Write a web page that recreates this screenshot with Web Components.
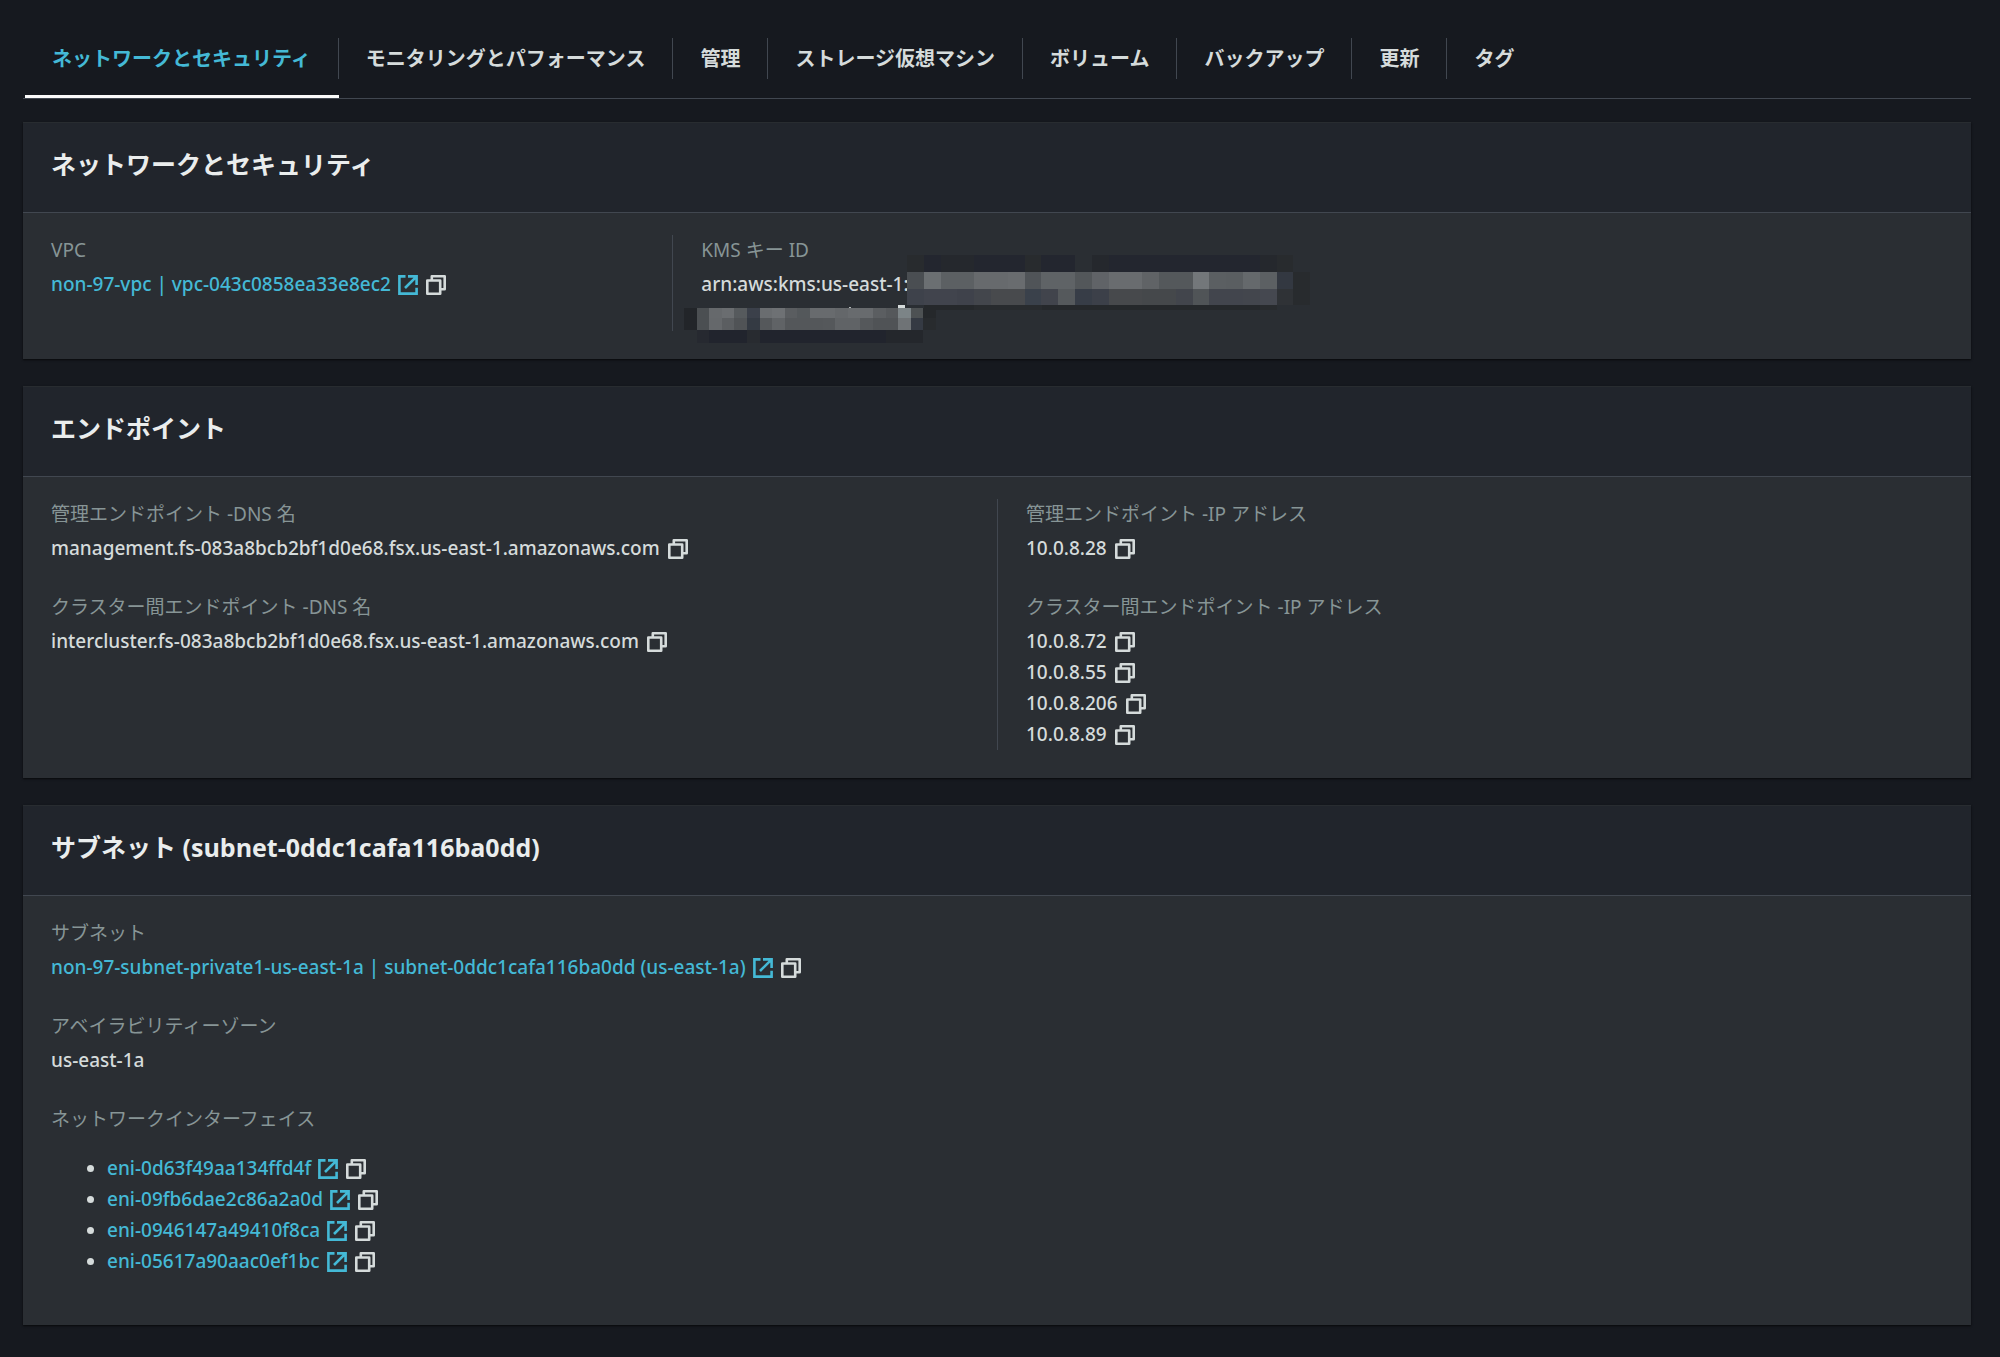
<!DOCTYPE html>
<html lang="ja">
<head>
<meta charset="utf-8">
<title>ネットワークとセキュリティ</title>
<style>
  body {
    margin: 0;
    background: #16191f;
    color: #d5dbdb;
    font: 19px/31px "Noto Sans", "Noto Sans CJK JP", sans-serif;
  }
</style>
</head>
<body>
<fs-page>
  <fs-tabs slot="tabs">
    <fs-tab selected>ネットワークとセキュリティ</fs-tab>
    <fs-tab>モニタリングとパフォーマンス</fs-tab>
    <fs-tab>管理</fs-tab>
    <fs-tab>ストレージ仮想マシン</fs-tab>
    <fs-tab>ボリューム</fs-tab>
    <fs-tab>バックアップ</fs-tab>
    <fs-tab>更新</fs-tab>
    <fs-tab last>タグ</fs-tab>
  </fs-tabs>

  <fs-card heading="ネットワークとセキュリティ" columns="3">
    <fs-column>
      <fs-field label="VPC">
        <fs-value href="#vpc">non-97-vpc | vpc-043c0858ea33e8ec2</fs-value>
      </fs-field>
    </fs-column>
    <fs-column divided>
      <fs-field label="KMS キー ID">
        <fs-value plain lines="2">arn:aws:kms:us-east-1:</fs-value>
      </fs-field>
      <fs-mosaic></fs-mosaic>
    </fs-column>
  </fs-card>

  <fs-card heading="エンドポイント" columns="2">
    <fs-column>
      <fs-field label="管理エンドポイント -DNS 名">
        <fs-value>management.fs-083a8bcb2bf1d0e68.fsx.us-east-1.amazonaws.com</fs-value>
      </fs-field>
      <fs-field label="クラスター間エンドポイント -DNS 名">
        <fs-value>intercluster.fs-083a8bcb2bf1d0e68.fsx.us-east-1.amazonaws.com</fs-value>
      </fs-field>
    </fs-column>
    <fs-column divided>
      <fs-field label="管理エンドポイント -IP アドレス">
        <fs-value>10.0.8.28</fs-value>
      </fs-field>
      <fs-field label="クラスター間エンドポイント -IP アドレス">
        <fs-value>10.0.8.72</fs-value>
        <fs-value>10.0.8.55</fs-value>
        <fs-value>10.0.8.206</fs-value>
        <fs-value>10.0.8.89</fs-value>
      </fs-field>
    </fs-column>
  </fs-card>

  <fs-card heading="サブネット (subnet-0ddc1cafa116ba0dd)" columns="1">
    <fs-column>
      <fs-field label="サブネット">
        <fs-value href="#subnet">non-97-subnet-private1-us-east-1a | subnet-0ddc1cafa116ba0dd (us-east-1a)</fs-value>
      </fs-field>
      <fs-field label="アベイラビリティーゾーン">
        <fs-value plain>us-east-1a</fs-value>
      </fs-field>
      <fs-field label="ネットワークインターフェイス">
        <fs-list>
          <fs-value href="#eni1">eni-0d63f49aa134ffd4f</fs-value>
          <fs-value href="#eni2">eni-09fb6dae2c86a2a0d</fs-value>
          <fs-value href="#eni3">eni-0946147a49410f8ca</fs-value>
          <fs-value href="#eni4">eni-05617a90aac0ef1bc</fs-value>
        </fs-list>
      </fs-field>
    </fs-column>
  </fs-card>
</fs-page>

<script>
  class Base extends HTMLElement {
    connectedCallback() {
      if (this.shadowRoot) return;
      this.attachShadow({ mode: 'open' }).innerHTML = this.view();
    }
  }

  customElements.define('fs-page', class extends Base {
    view() {
      return `<style>
        :host { display: block; padding: 0 29px 30px 23px; }
        main { display: flex; flex-direction: column; gap: 27px; margin-top: 23px; }
      </style>
      <slot name="tabs"></slot>
      <main><slot></slot></main>`;
    }
  });

  customElements.define('fs-tabs', class extends Base {
    view() {
      return `<style>
        :host { display: block; }
        nav { display: flex; padding: 38px 0 0 2px; border-bottom: 1px solid #414750; }
      </style>
      <nav role="tablist"><slot></slot></nav>`;
    }
  });

  customElements.define('fs-tab', class extends Base {
    view() {
      return `<style>
        :host { display: flex; }
        button {
          margin: 0; padding: 0 0 16px; border: 0; border-bottom: 3px solid transparent;
          background: none; color: #d5dbdb; cursor: pointer;
          font: bold 20px/41px "Noto Sans CJK JP", sans-serif;
        }
        span { display: block; height: 41px; line-height: 39px; padding: 0 27px; border-right: 1px solid #414750; }
        :host([last]) span { border-right: 0; }
        :host([selected]) button { color: #44b9d6; border-bottom-color: #fafafa; }
      </style>
      <button type="button" role="tab" aria-selected="${this.hasAttribute('selected')}"><span><slot></slot></span></button>`;
    }
  });

  customElements.define('fs-card', class extends Base {
    view() {
      return `<style>
        :host { display: block; background: #2a2e33; box-shadow: 0 1px 2px #000000b0; }
        header { box-sizing: border-box; height: 91px; padding: 23px 28px; background: #21252c;
                 border-top: 1px solid #282c30; border-bottom: 1px solid #414750; }
        h2 { margin: 0; color: #eaeded; font: bold 25px/36px "Open Sans", "Noto Sans CJK JP", sans-serif; }
        .body { display: grid; grid-template-columns: repeat(${this.getAttribute('columns')}, 1fr); padding: 22px 0 28px; }
      </style>
      <header><h2>${this.getAttribute('heading')}</h2></header>
      <div class="body"><slot></slot></div>`;
    }
  });

  customElements.define('fs-column', class extends Base {
    view() {
      return `<style>
        :host { display: flex; flex-direction: column; gap: 28px; padding: 0 28px; position: relative; }
        :host([divided]) { border-left: 1px solid #414750; }
      </style><slot></slot>`;
    }
  });

  customElements.define('fs-field', class extends Base {
    view() {
      return `<style>
        :host { display: block; }
        .label { color: #879596; font-size: 19px; line-height: 31px; margin-bottom: 3px; }
      </style>
      <div class="label">${this.getAttribute('label')}</div>
      <slot></slot>`;
    }
  });

  customElements.define('fs-list', class extends Base {
    view() {
      const items = [...this.children];
      items.forEach((el, i) => el.slot = 'i' + i);
      return `<style>
        :host { display: block; }
        ul { margin: 18px 0 20px; padding: 0 0 0 56px; }
      </style>
      <ul>${items.map((_, i) => `<li><slot name="i${i}"></slot></li>`).join('')}</ul>`;
    }
  });

  customElements.define('fs-value', class extends Base {
    view() {
      const href = this.getAttribute('href');
      const text = href
        ? `<a href="${href}"><slot></slot><svg viewBox="0 0 20 20" aria-hidden="true"><path d="M7.5 1.4H1.4V18.6H18.6V12.8M10 1.4H18.6V10M18.2 1.8L7 13"/></svg></a>`
        : `<span><slot></slot></span>`;
      const copy = this.hasAttribute('plain') ? '' :
        `<button type="button" aria-label="コピー"><svg viewBox="0 0 20 20" aria-hidden="true"><path d="M1.3 5.5H14.2V18.7H1.3ZM5.8 5.5V1.3H18.7V14.2H14.2" stroke-linejoin="round"/></svg></button>`;
      return `<style>
        :host { display: flex; align-items: center; height: 31px; gap: 8px; font-weight: 500; }
        :host([lines="2"]) { height: 62px; align-items: flex-start; }
        a { display: flex; align-items: center; gap: 7px; color: #44b9d6; text-decoration: none; }
        button { display: flex; margin: 0; padding: 0; border: 0; background: none; color: #d5dbdb; cursor: pointer; }
        svg { display: block; width: 20px; height: 20px; fill: none; stroke: currentColor; stroke-width: 2.6; }
      </style>${text}${copy}`;
    }
  });

  /* Pixelated cover over the rest of the key ARN. */
  customElements.define('fs-mosaic', class extends Base {
    view() {
      const row = (x0, step, y, h, colors) => colors.split(' ').map((c, i) => {
        if (c === '-') return '';
        const a = Math.round(x0 + i * step), b = Math.round(x0 + (i + 1) * step);
        return `<rect x="${a}" y="${y}" width="${b - a}" height="${h}" fill="#${c}"/>`;
      }).join('');
      const D = '23262f', d = '25282d';
      const cells =
        row(234, 16.8, 20, 17, `282b2e ${D} ${d} ${d} ${D} ${D} ${D} 282b2e ${D} ${D} - ${d} ${D} ${D} ${D} ${D} ${D} ${D} ${D} ${D} ${D} ${d} 282b2e`) +
        row(234, 16.8, 37, 17, '4a4e52 6b6f72 5c6063 5c6063 676a6d 676a6d 696c6f 505458 5f6366 5f6366 53575a 606367 696c6f 696c6f 606366 54585b 54585b 73777a 5b5f62 5a5e61 65696c 5c6063 333841 282b2e') +
        row(234, 16.8, 54, 16, '3e424b 41444d 41444d 3f424b 43464c 484a4d 484a4d 3a414b 41444c 55595c 373d47 3c4049 47494c 47494c 45484b 45484b 42454c 505457 42454d 42454d 43464d 454850 2f3236 282b2e') +
        row(251, 16.8, 70, 5, '25282b 25282b 25282b 282b2e 282b2e 282b2e 282b2e 25282b 25282b 25282b 25282b 25282b 25282b 25282b 25282b 25282b 25282b 25282b 25282b 25282b 282b2e') +
        row(11, 12.6, 73, 10, '222529 4b4f52 66696c 6a6d70 565a5d 3b404a 6a6d70 6e7174 5a5d60 54585b 686b6e 686b6e 64676a 686b6e 686b6e 5b5e61 55585b 7c8487 4d5153 25282b') +
        row(11, 12.6, 83, 12, '222529 4b4f52 65686b 5b5e61 505356 343a43 55585b 606366 54575a 54575a 54575a 55585b 606366 606366 55585b 505356 505356 6f7376 353a43 282b2e') +
        row(11, 12.6, 95, 13, '- 262930 21242d 21242d 21242d 282b30 21242d 21242d 21242d 21242d 21242d 21242d 21242d 21242d 21242d 21242d 24272c 24272c 24272c -') +
        '<rect x="225" y="70" width="7" height="3" fill="#d5dbdb"/><rect x="176" y="72" width="2" height="1" fill="#b5bbbb"/>';
      return `<style>
        :host { position: absolute; left: 0; top: 0; }
        svg { display: block; }
      </style>
      <svg width="648" height="110" shape-rendering="crispEdges" aria-hidden="true">${cells}</svg>`;
    }
  });
</script>
</body>
</html>
